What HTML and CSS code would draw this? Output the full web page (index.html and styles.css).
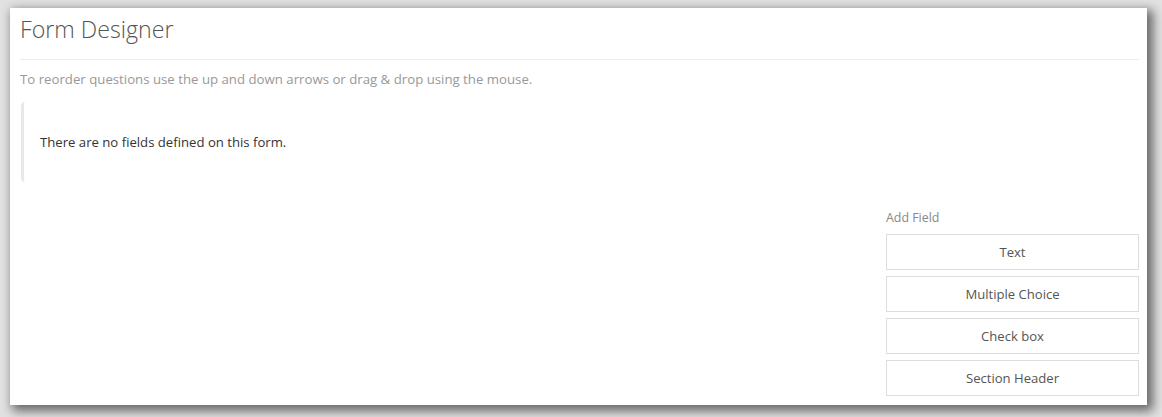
FILE: index.html
```html
<!DOCTYPE html>
<html>
<head>
<meta charset="utf-8">
<link rel="stylesheet" href="styles.css">
</head>
<body>
<div class="panel">
  <h1 class="title">Form Designer</h1>
  <p class="hint">To reorder questions use the up and down arrows or drag &amp; drop using the mouse.</p>
  <div class="well">There are no fields defined on this form.</div>
  <div class="add">
    <div class="add-label">Add Field</div>
    <button class="btn">Text</button>
    <button class="btn">Multiple Choice</button>
    <button class="btn">Check box</button>
    <button class="btn">Section Header</button>
  </div>
</div>
</body>
</html>
```
FILE: styles.css
```css
html, body {
  margin: 0;
  padding: 0;
  background: #ffffff;
  font-family: "Open Sans", "Liberation Sans", sans-serif;
}
body {
  width: 1162px;
  height: 417px;
  overflow: hidden;
  background: #e2e2e2;
}
.panel {
  margin: 8px 0 0 10px;
  width: 1137px;
  height: 397px;
  box-sizing: border-box;
  padding: 0 8px 0 10px;
  background: #fff;
  box-shadow: 4px 4px 10px 2px rgba(0,0,0,0.55);
  display: flex;
  flex-direction: column;
}
.title {
  margin: 0;
  padding: 5px 0 14px;
  font-size: 23.2px;
  font-weight: 300;
  line-height: 32px;
  color: #555;
  border-bottom: 1px solid #eee;
}
.hint {
  margin: 9px 0 0;
  font-size: 13.22px;
  line-height: 20px;
  color: #999;
}
.well {
  margin: 13px 0 0 1px;
  height: 80px;
  box-sizing: border-box;
  border-left: 3px solid #e8e8e8;
  border-radius: 4px 0 0 4px;
  padding: 0 0 0 16px;
  display: flex;
  align-items: center;
  font-size: 13.15px;
  color: #333;
}
.add {
  align-self: flex-end;
  width: 253px;
  margin-top: 28px;
  display: flex;
  flex-direction: column;
  gap: 6px;
}
.add-label {
  font-size: 12.4px;
  line-height: 16px;
  color: #888;
  margin-bottom: 2px;
}
.btn {
  height: 36px;
  background: #fff;
  border: 1px solid #ddd;
  border-radius: 0;
  font-family: "Open Sans", "Liberation Sans", sans-serif;
  font-size: 13.1px;
  color: #555;
  padding: 0;
}
```
